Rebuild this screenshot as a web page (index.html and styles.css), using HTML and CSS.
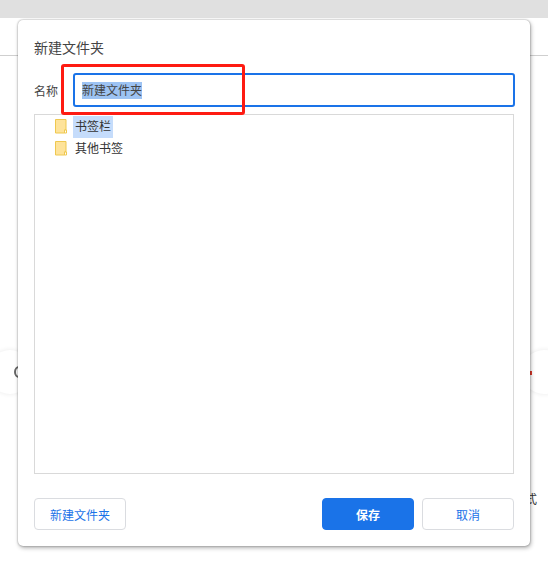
FILE: index.html
```html
<!DOCTYPE html>
<html lang="zh-CN">
<head>
<meta charset="utf-8">
<title>新建文件夹</title>
<link rel="stylesheet" href="styles.css">
</head>
<body>
<div class="topbar"></div>
<div class="divider"></div>
<div class="circle circle-left"><span class="glyph-left"></span></div>
<div class="circle circle-right"><span class="glyph-right"></span></div>
<span class="peek">式</span>

<section class="dialog">
  <h1 class="title">新建文件夹</h1>
  <div class="name-row">
    <label class="name-label">名称</label>
    <div class="name-input"><span class="selected">新建文件夹</span></div>
  </div>
  <div class="tree">
    <div class="tree-row">
      <svg class="folder" width="12" height="15" viewBox="0 0 12 15"><path d="M.5.5h10.500v10.500h-1.500v3h-9z" fill="#fee39a" stroke="#efc84f"/><path d="M9.500 11h2v3h-2z" fill="#fff" stroke="#efc84f"/></svg>
      <span class="tree-label tree-label-active">书签栏</span>
    </div>
    <div class="tree-row">
      <svg class="folder" width="12" height="15" viewBox="0 0 12 15"><path d="M.5.5h10.500v10.500h-1.500v3h-9z" fill="#fee39a" stroke="#efc84f"/><path d="M9.500 11h2v3h-2z" fill="#fff" stroke="#efc84f"/></svg>
      <span class="tree-label">其他书签</span>
    </div>
  </div>
  <div class="actions">
    <button class="btn">新建文件夹</button>
    <div class="actions-right">
      <button class="btn btn-primary">保存</button>
      <button class="btn">取消</button>
    </div>
  </div>
</section>

<div class="annotation"></div>
</body>
</html>
```

FILE: styles.css
```css
* { box-sizing: border-box; }
html, body { margin: 0; height: 100%; }
body {
  position: relative;
  width: 548px;
  height: 569px;
  overflow: hidden;
  background: #fff;
  font-family: "Liberation Sans", "Noto Sans CJK SC", sans-serif;
  font-size: 12px;
  color: #333;
}
.topbar { height: 18px; background: #e0e0e0; }
.divider { height: 1px; margin-top: 37px; background: #cfcfcf; }
.circle {
  position: absolute;
  top: 350px;
  width: 44px;
  height: 44px;
  border-radius: 50%;
  background: #fff;
  box-shadow: 0 0 5px rgba(0, 0, 0, .09);
}
.circle-left { left: -12px; }
.circle-right { left: 522px; }
.glyph-left {
  position: absolute;
  left: 26px;
  top: 16px;
  width: 10px;
  height: 12px;
  border: 2px solid #666;
  border-radius: 50%;
}
.glyph-right {
  position: absolute;
  left: 8px;
  top: 21px;
  width: 2px;
  height: 4px;
  background: #e0392b;
}
.peek { position: absolute; left: 525px; top: 493px; font-size: 12px; line-height: 14px; color: #333; }
.dialog {
  position: absolute;
  left: 18px;
  top: 20px;
  width: 512px;
  height: 526px;
  padding: 0 16px;
  display: flex;
  flex-direction: column;
  background: #fff;
  border-radius: 5px;
  box-shadow: 0 0 2px rgba(0, 0, 0, .4), 1px 2px 4px rgba(0, 0, 0, .3);
}
.title {
  margin: 18px 0 0;
  font-size: 14px;
  font-weight: 400;
  line-height: 20px;
  color: #444;
}
.name-row {
  display: flex;
  align-items: center;
  gap: 15px;
  margin-top: 15px;
}
.name-label { width: 24px; font-size: 12px; color: #444; }
.name-input {
  flex: 0 0 442px;
  height: 34px;
  margin-right: -1px;
  padding-left: 7px;
  display: flex;
  align-items: center;
  border: 2px solid #1a73e8;
  border-radius: 3px;
  font-size: 12px;
}
.selected { background: #9dc3f3; line-height: 16px; padding-top: 1px; color: #444; }
.tree {
  flex: 0 0 360px;
  margin-top: 7px;
  padding-top: 1px;
  border: 1px solid #d9d9d9;
}
.tree-row { display: flex; align-items: center; height: 22px; padding-left: 20px; }
.folder { flex: none; margin-right: 6px; margin-top: -2px; }
.tree-label { padding: 0 2px; line-height: 22px; font-size: 12px; color: #333; }
.tree-label-active { background: #c5dcfb; }
.actions {
  display: flex;
  justify-content: space-between;
  margin-top: 24px;
}
.actions-right { display: flex; gap: 8px; }
.btn {
  width: 92px;
  height: 32px;
  padding: 0;
  background: #fff;
  border: 1px solid #dadce0;
  border-radius: 4px;
  font: inherit;
  font-size: 12px;
  color: #1a73e8;
}
.btn-primary { background: #1a73e8; border-color: #1a73e8; color: #fff; font-weight: 700; }
.annotation {
  position: absolute;
  left: 61px;
  top: 64px;
  width: 184px;
  height: 51px;
  border: 3px solid #fe1b12;
  border-radius: 3px;
}
```
